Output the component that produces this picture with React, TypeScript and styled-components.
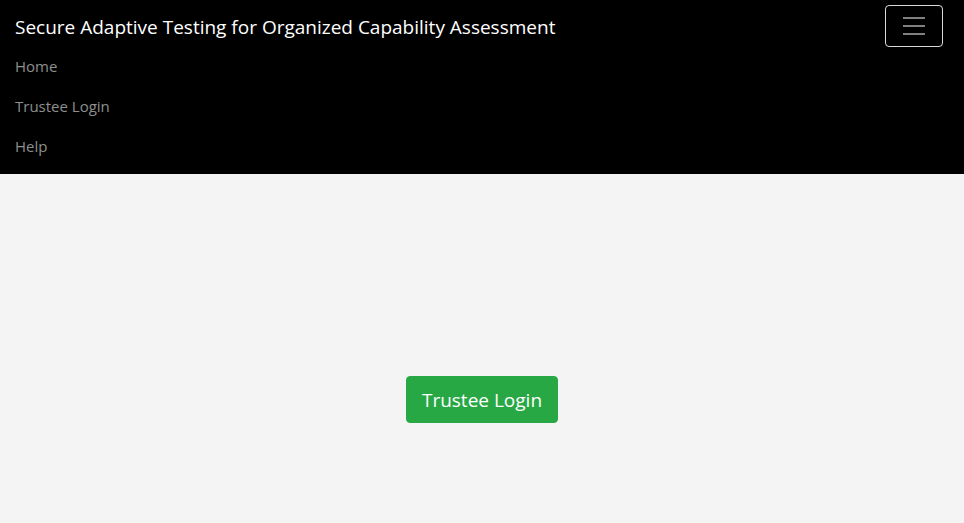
import styled, { createGlobalStyle } from 'styled-components'

const GlobalStyle = createGlobalStyle`
  html, body {
    margin: 0;
    padding: 0;
  }
  body {
    background: #f4f4f4;
    font-family: "Open Sans", "Noto Sans", "Liberation Sans", sans-serif;
  }
`

const links = ['Home', 'Trustee Login', 'Help']

export default function App() {
  return (
    <>
      <GlobalStyle />
      <Navbar>
        <TopRow>
          <Brand href="#">Secure Adaptive Testing for Organized Capability Assessment</Brand>
          <Toggler aria-label="Toggle navigation">
            <TogglerIcon viewBox="0 0 30 30">
              <path
                stroke="rgba(255,255,255,0.5)"
                strokeWidth="2"
                strokeLinecap="butt"
                d="M4 7h22M4 15h22M4 23h22"
              />
            </TogglerIcon>
          </Toggler>
        </TopRow>
        <NavList>
          {links.map((l) => (
            <NavItem key={l}>
              <NavLink href="#">{l}</NavLink>
            </NavItem>
          ))}
        </NavList>
      </Navbar>
      <Main>
        <LoginButton>Trustee Login</LoginButton>
      </Main>
    </>
  )
}

const Navbar = styled.nav`
  background: #000;
  padding: 5px 21px 8px 15px;
`

const TopRow = styled.div`
  display: flex;
  justify-content: space-between;
  align-items: flex-start;
  height: 41px;
`

const Brand = styled.a`
  color: #fff;
  text-decoration: none;
  font-size: 19px;
  line-height: 30px;
  padding-top: 7px;
  white-space: nowrap;
`

const Toggler = styled.button`
  width: 58px;
  height: 42px;
  background: transparent;
  border: 1px solid rgba(255, 255, 255, 0.85);
  border-radius: 4px;
  display: flex;
  align-items: center;
  justify-content: center;
  padding: 0;
`

const TogglerIcon = styled.svg`
  width: 30px;
  height: 30px;
`

const NavList = styled.ul`
  list-style: none;
  margin: 0;
  padding: 0;
  display: flex;
  flex-direction: column;
`

const NavItem = styled.li``

const NavLink = styled.a`
  display: block;
  padding: 8px 0;
  line-height: 24px;
  font-size: 15px;
  color: rgba(255, 255, 255, 0.56);
  text-decoration: none;
`

const Main = styled.main`
  display: flex;
  justify-content: center;
  padding-top: 202px;
`

const LoginButton = styled.button`
  background: #28a745;
  color: #fff;
  border: 1px solid #28a745;
  border-radius: 4px;
  font-family: inherit;
  font-size: 19px;
  line-height: 29px;
  padding: 9px 15px 7px;
  cursor: pointer;
`
